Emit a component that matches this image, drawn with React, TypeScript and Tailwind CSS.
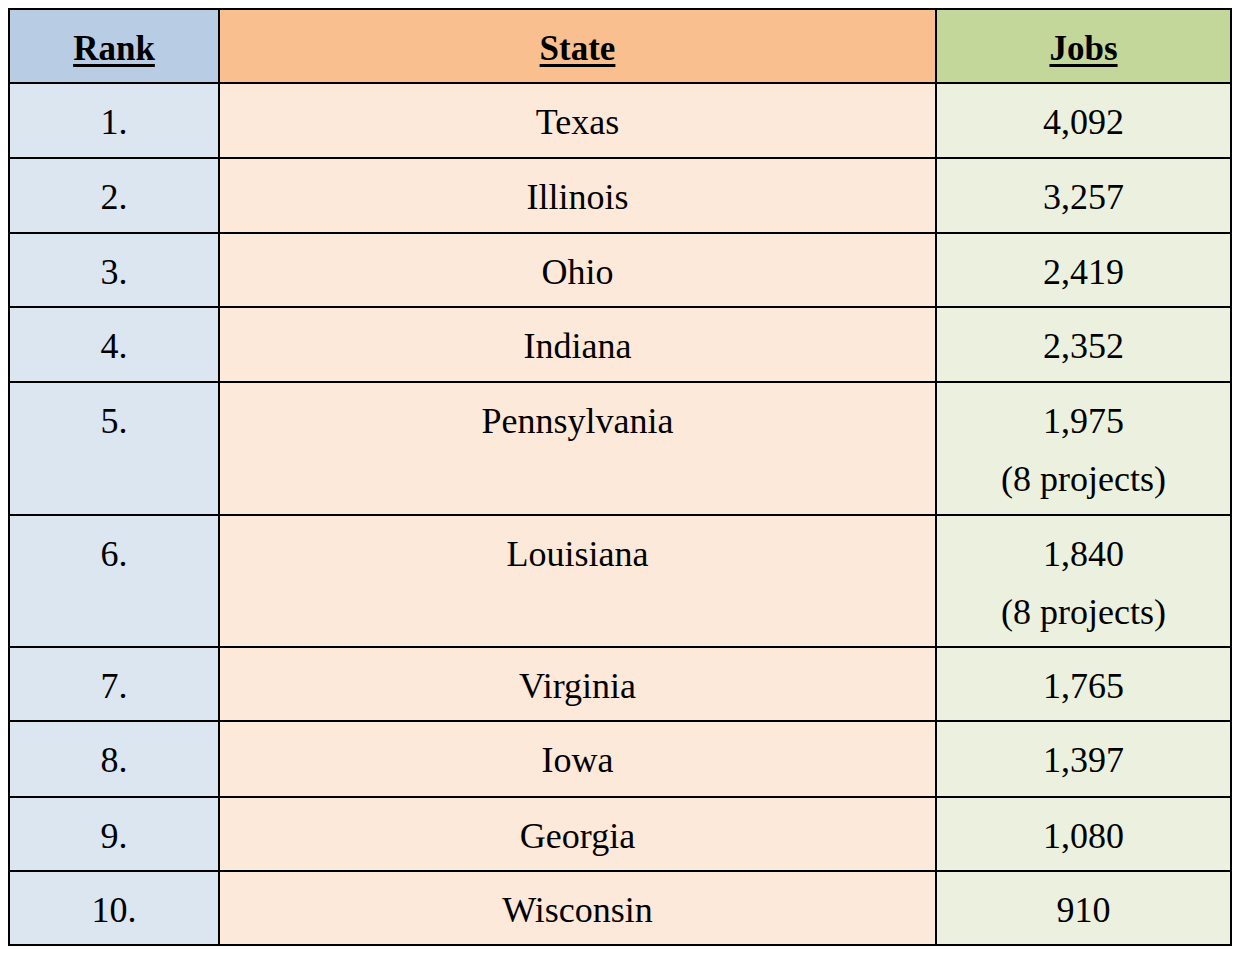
import React from "react";

type Row = { rank: string; state: string; jobs: string; extra?: string; h: string };

const rows: Row[] = [
  { rank: "1.", state: "Texas", jobs: "4,092", h: "h-[75px]" },
  { rank: "2.", state: "Illinois", jobs: "3,257", h: "h-[75px]" },
  { rank: "3.", state: "Ohio", jobs: "2,419", h: "h-[74px]" },
  { rank: "4.", state: "Indiana", jobs: "2,352", h: "h-[75px]" },
  { rank: "5.", state: "Pennsylvania", jobs: "1,975", extra: "(8 projects)", h: "h-[133px]" },
  { rank: "6.", state: "Louisiana", jobs: "1,840", extra: "(8 projects)", h: "h-[132px]" },
  { rank: "7.", state: "Virginia", jobs: "1,765", h: "h-[74px]" },
  { rank: "8.", state: "Iowa", jobs: "1,397", h: "h-[76px]" },
  { rank: "9.", state: "Georgia", jobs: "1,080", h: "h-[74px]" },
  { rank: "10.", state: "Wisconsin", jobs: "910", h: "h-[74px]" },
];

const cell = "flex flex-col items-center pt-[20px] text-[36px] leading-[36px]";
const head = "font-bold text-[35px] leading-[35px] underline decoration-[3px] underline-offset-[4px] mt-[4px]";

export default function App() {
  return (
    <div
      className="w-[1246px] h-[956px] bg-white pt-[8px] pl-[8px] text-black"
      style={{ fontFamily: '"Liberation Serif", "Times New Roman", serif' }}
    >
      <div className="w-[1224px] border-2 border-black flex flex-col">
        <div className="flex h-[72px]">
          <div className="w-[208px] bg-[#b8cce4] flex items-center justify-center">
            <span className={head}>Rank</span>
          </div>
          <div className="w-[717px] border-l-2 border-black bg-[#fabf8f] flex items-center justify-center">
            <span className={head}>State</span>
          </div>
          <div className="w-[295px] border-l-2 border-black bg-[#c4d79b] flex items-center justify-center">
            <span className={head}>Jobs</span>
          </div>
        </div>
        {rows.map((r) => (
          <div key={r.rank} className={`flex border-t-2 border-black ${r.h}`}>
            <div className={`w-[208px] bg-[#dce6f1] ${cell}`}>
              <span>{r.rank}</span>
            </div>
            <div className={`w-[717px] border-l-2 border-black bg-[#fde9d9] ${cell}`}>
              <span>{r.state}</span>
            </div>
            <div className={`w-[295px] border-l-2 border-black bg-[#ebf1de] ${cell}`}>
              <span>{r.jobs}</span>
              {r.extra && <span className="mt-[22px]">{r.extra}</span>}
            </div>
          </div>
        ))}
      </div>
    </div>
  );
}
